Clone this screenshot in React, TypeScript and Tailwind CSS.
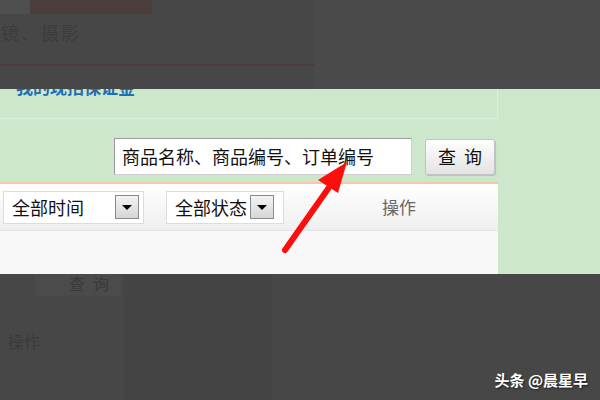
const font = { fontFamily: '"Noto Sans CJK SC", "Noto Sans", sans-serif' };

const SelectBox = ({ label, width, arrowGap }: { label: string; width: string; arrowGap: string }) => (
  <div className={`flex h-[33px] items-center border border-[#dcdcdc] bg-white pl-[8px] pr-[3px] ${width}`}>
    <span className="text-[18px] leading-none text-[#111]">{label}</span>
    <span className={`flex h-[24px] w-[24px] items-center justify-center border border-[#8a8a8a] bg-gradient-to-b from-[#f4f4f4] to-[#d6d6d6] ${arrowGap}`}>
      <span className="h-0 w-0 border-x-[5px] border-t-[5px] border-x-transparent border-t-black" />
    </span>
  </div>
);

export default function App() {
  return (
    <div className="relative h-[400px] w-[600px] overflow-hidden bg-[#474747]" style={font}>
      {/* dimmed top */}
      <div className="relative h-[89px]">
        <div className="flex h-[14px]">
          <div className="w-[30px] bg-[#4f4f4f]" />
          <div className="w-[122px] bg-[#4a3e3d]" />
        </div>
        <div className="mt-[5px] ml-[1px] text-[18px] tracking-[2px] text-[#3c3c3c]">镜、摄影</div>
        <div className="mt-[18px] h-[2px] w-[320px] bg-[#4b3b3b]" />
        <div className="absolute right-0 top-0 h-[89px] w-[286px] bg-[#4a4a4a]" />
      </div>

      {/* bright band */}
      <div className="flex h-[185px] bg-[#cde7cd]">
        <div className="flex w-[498px] flex-col">
          <div className="h-[30px] overflow-hidden border-b border-r border-[#dcefdc]">
            <div className="-mt-[11px] ml-[16px] text-[17px] font-bold leading-none text-[#1d6eb5]">我的现招保证金</div>
          </div>
          <div className="flex items-center pl-[114px] pt-[19px]">
            <div className="flex h-[37px] w-[298px] items-center border border-[#9a9a9a] border-b-[#cfcfcf] border-r-[#cfcfcf] bg-white pl-[7px] text-[18px] text-[#111]">
              商品名称、商品编号、订单编号
            </div>
            <button className="ml-[13px] flex h-[36px] w-[70px] items-center justify-center gap-[8px] rounded-[3px] border border-[#c4c4c4] bg-gradient-to-b from-white to-[#e3e3e3] text-[18px] text-[#111] shadow-[1px_1px_1px_rgba(0,0,0,0.15)]">
              <span>查</span>
              <span>询</span>
            </button>
          </div>
          <div className="mt-[7px] h-[2px] bg-[#f6c9a6]" />
          <div className="flex h-[47px] items-center border-b border-[#e4e4e4] bg-gradient-to-b from-white to-[#efefef] pl-[3px]">
            <SelectBox label="全部时间" width="w-[141px]" arrowGap="ml-auto mr-[1px]" />
            <div className="ml-[22px]">
              <SelectBox label="全部状态" width="w-[118px]" arrowGap="ml-[3px]" />
            </div>
            <div className="ml-[98px] text-[17px] text-[#666]">操作</div>
          </div>
          <div className="flex-1 bg-[#f8f8f8]" />
        </div>
        <div className="flex-1" />
      </div>

      {/* dimmed bottom */}
      <div className="flex h-[126px]">
        <div className="w-[125px] border-r border-[#444]">
          <div className="ml-[35px] flex h-[22px] w-[86px] items-start justify-end gap-[8px] bg-[#4b4b4b] pr-[12px] text-[16px] leading-[18px] text-[#3a3a3a]">
            <span>查</span>
            <span>询</span>
          </div>
          <div className="mt-[20px] h-[1px] bg-[#4e4444]" />
          <div className="mt-[12px] pl-[8px] text-[16px] text-[#3a3a3a]">操作</div>
        </div>
        <div className="w-[147px] bg-[#444444]" />
        <div className="relative flex-1">
          <div className="absolute bottom-[9px] right-[12px] text-[15px] font-bold text-white [text-shadow:1px_1px_2px_rgba(0,0,0,0.6)]">
            头条 @晨星早
          </div>
        </div>
      </div>

      {/* red arrow */}
      <svg className="absolute left-0 top-0" width="600" height="400" viewBox="0 0 600 400">
        <line x1="285" y1="250" x2="330" y2="186" stroke="#ff0d0d" strokeWidth="6" strokeLinecap="round" />
        <polygon points="347,162 318,180 338,193" fill="#ff0d0d" />
      </svg>
    </div>
  );
}
